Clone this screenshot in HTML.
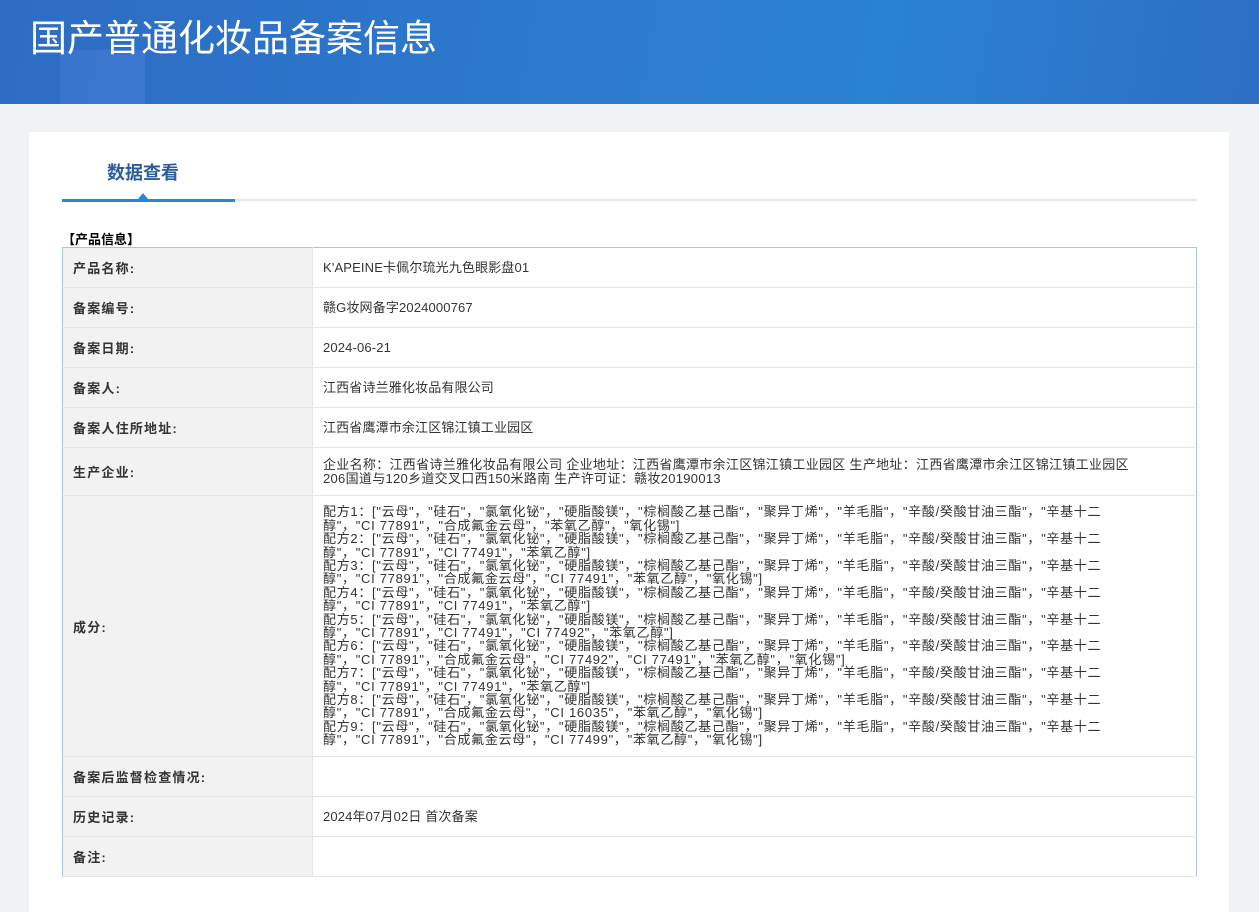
<!DOCTYPE html>
<html><head><meta charset="utf-8"><style>
body{margin:0;width:1259px;height:897px;background:#eff3f6;font-family:"Liberation Sans","Noto Sans CJK SC",sans-serif;overflow:hidden;position:relative}
.hd{position:absolute;left:0;top:0;width:1259px;height:104px;background:linear-gradient(100deg,#2d6cc2 0%,#2c7bd0 50%,#2a82d4 70%,#2d6ec2 100%);overflow:hidden}
.hd .t{position:absolute;left:30px;top:8px;color:#fff;font-size:37px}
.hd .b1{position:absolute;left:60px;top:50px;width:85px;height:60px;background:rgba(100,140,230,.25)}
.card{position:absolute;left:29px;top:132px;width:1200px;height:780px;background:#fff}
.tab{position:absolute;left:78px;top:27px;font-size:18px;font-weight:bold;color:#2b5d9b}
.gl{position:absolute;left:33px;top:67px;width:1135px;height:2px;background:#e4e6e9}
.bl{position:absolute;left:33px;top:67px;width:173px;height:3px;background:#2a86d6}
.tri{position:absolute;left:109px;top:61px;width:0;height:0;border-left:5px solid transparent;border-right:5px solid transparent;border-bottom:6px solid #2a86d6}
.sec{position:absolute;left:33px;top:97px;font-size:13px;font-weight:bold;color:#000}
table{position:absolute;left:33px;top:115px;width:1135px;border-collapse:collapse;border:1px solid #a6c3ea;font-size:13px;color:#333}
td{border-bottom:1px solid #e4e4e4;padding:0 10px;height:39px}
td.l{width:229px;background:#f2f2f2;font-weight:bold;color:#333;border-right:1px solid #e4e4e4;letter-spacing:1.2px}
td.v{line-height:13.4px;white-space:nowrap;letter-spacing:0.15px}
td.p{letter-spacing:0.3px}
td.i{letter-spacing:0.7px}
</style></head><body>
<div class="hd"><div class="b1"></div><div class="t">国产普通化妆品备案信息</div></div>
<div class="card">
<div class="tab">数据查看</div>
<div class="gl"></div><div class="bl"></div><div class="tri"></div>
<div class="sec">【产品信息】</div>
<table>
<tr><td class="l">产品名称:</td><td class="v">K'APEINE卡佩尔琉光九色眼影盘01</td></tr>
<tr><td class="l">备案编号:</td><td class="v">赣G妆网备字2024000767</td></tr>
<tr><td class="l">备案日期:</td><td class="v">2024-06-21</td></tr>
<tr><td class="l">备案人:</td><td class="v">江西省诗兰雅化妆品有限公司</td></tr>
<tr><td class="l">备案人住所地址:</td><td class="v">江西省鹰潭市余江区锦江镇工业园区</td></tr>
<tr><td class="l" style="height:47px">生产企业:</td><td class="v p">企业名称：江西省诗兰雅化妆品有限公司 企业地址：江西省鹰潭市余江区锦江镇工业园区 生产地址：江西省鹰潭市余江区锦江镇工业园区<br>206国道与120乡道交叉口西150米路南 生产许可证：赣妆20190013</td></tr>
<tr><td class="l" style="height:260px">成分:</td><td class="v i">配方1：["云母"，"硅石"，"氯氧化铋"，"硬脂酸镁"，"棕榈酸乙基己酯"，"聚异丁烯"，"羊毛脂"，"辛酸/癸酸甘油三酯"，"辛基十二<br>醇"，"CI 77891"，"合成氟金云母"，"苯氧乙醇"，"氧化锡"]<br>配方2：["云母"，"硅石"，"氯氧化铋"，"硬脂酸镁"，"棕榈酸乙基己酯"，"聚异丁烯"，"羊毛脂"，"辛酸/癸酸甘油三酯"，"辛基十二<br>醇"，"CI 77891"，"CI 77491"，"苯氧乙醇"]<br>配方3：["云母"，"硅石"，"氯氧化铋"，"硬脂酸镁"，"棕榈酸乙基己酯"，"聚异丁烯"，"羊毛脂"，"辛酸/癸酸甘油三酯"，"辛基十二<br>醇"，"CI 77891"，"合成氟金云母"，"CI 77491"，"苯氧乙醇"，"氧化锡"]<br>配方4：["云母"，"硅石"，"氯氧化铋"，"硬脂酸镁"，"棕榈酸乙基己酯"，"聚异丁烯"，"羊毛脂"，"辛酸/癸酸甘油三酯"，"辛基十二<br>醇"，"CI 77891"，"CI 77491"，"苯氧乙醇"]<br>配方5：["云母"，"硅石"，"氯氧化铋"，"硬脂酸镁"，"棕榈酸乙基己酯"，"聚异丁烯"，"羊毛脂"，"辛酸/癸酸甘油三酯"，"辛基十二<br>醇"，"CI 77891"，"CI 77491"，"CI 77492"，"苯氧乙醇"]<br>配方6：["云母"，"硅石"，"氯氧化铋"，"硬脂酸镁"，"棕榈酸乙基己酯"，"聚异丁烯"，"羊毛脂"，"辛酸/癸酸甘油三酯"，"辛基十二<br>醇"，"CI 77891"，"合成氟金云母"，"CI 77492"，"CI 77491"，"苯氧乙醇"，"氧化锡"]<br>配方7：["云母"，"硅石"，"氯氧化铋"，"硬脂酸镁"，"棕榈酸乙基己酯"，"聚异丁烯"，"羊毛脂"，"辛酸/癸酸甘油三酯"，"辛基十二<br>醇"，"CI 77891"，"CI 77491"，"苯氧乙醇"]<br>配方8：["云母"，"硅石"，"氯氧化铋"，"硬脂酸镁"，"棕榈酸乙基己酯"，"聚异丁烯"，"羊毛脂"，"辛酸/癸酸甘油三酯"，"辛基十二<br>醇"，"CI 77891"，"合成氟金云母"，"CI 16035"，"苯氧乙醇"，"氧化锡"]<br>配方9：["云母"，"硅石"，"氯氧化铋"，"硬脂酸镁"，"棕榈酸乙基己酯"，"聚异丁烯"，"羊毛脂"，"辛酸/癸酸甘油三酯"，"辛基十二<br>醇"，"CI 77891"，"合成氟金云母"，"CI 77499"，"苯氧乙醇"，"氧化锡"]</td></tr>
<tr><td class="l">备案后监督检查情况:</td><td class="v"></td></tr>
<tr><td class="l">历史记录:</td><td class="v">2024年07月02日 首次备案</td></tr>
<tr><td class="l">备注:</td><td class="v"></td></tr>
</table>
</div>
</body></html>
